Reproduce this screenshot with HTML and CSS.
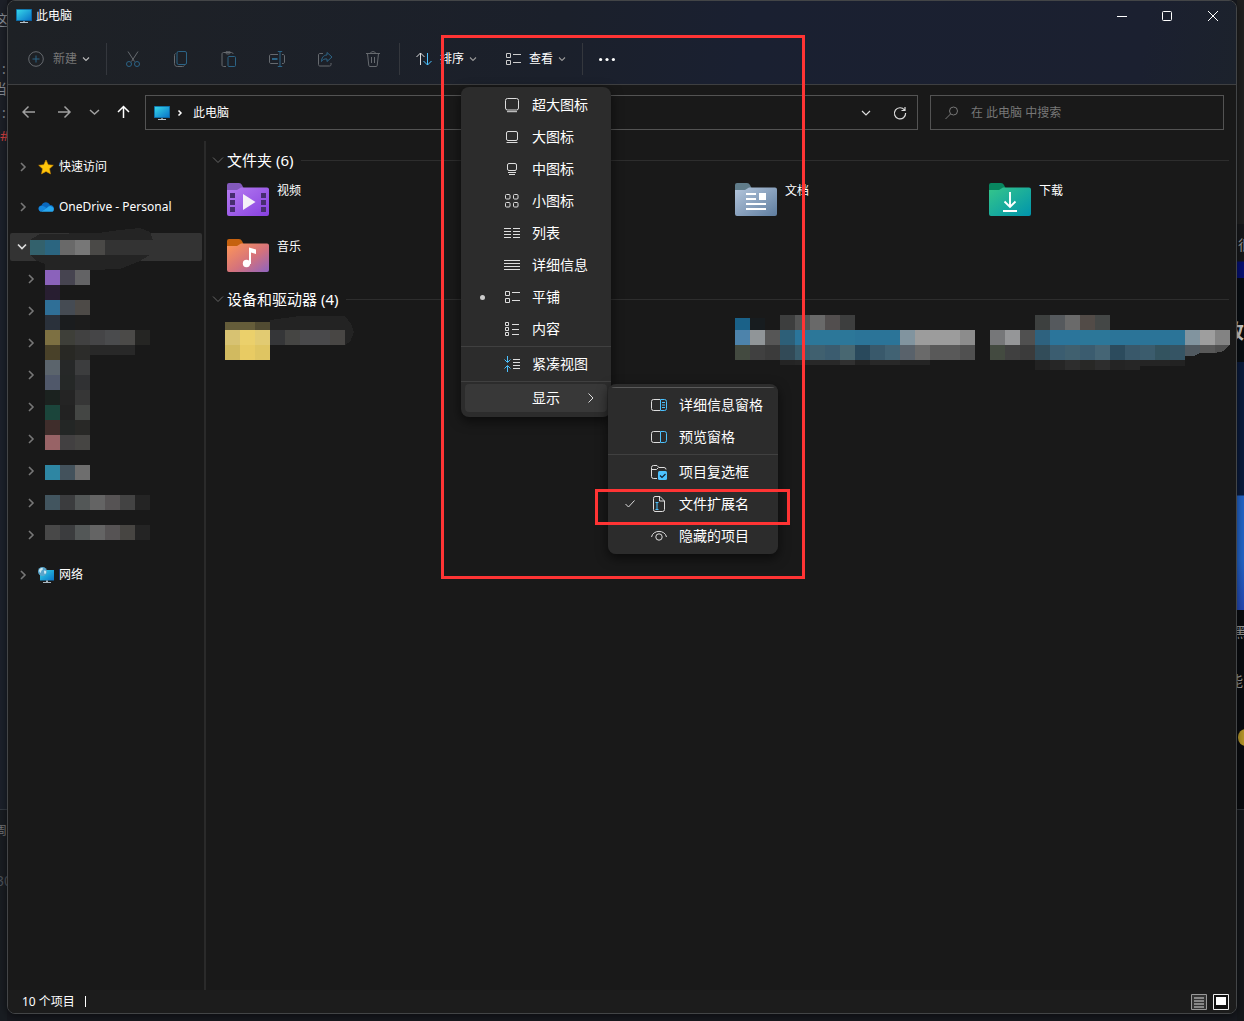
FILE: index.html
```html
<!DOCTYPE html>
<html lang="zh-CN">
<head>
<meta charset="utf-8">
<title>此电脑</title>
<link rel="stylesheet" href="styles.css">
</head>
<body>
<svg width="0" height="0" class="defs">
  <defs>
    <linearGradient id="scr" x1="0" y1="0" x2="1" y2="1"><stop offset="0" stop-color="#37d7e8"/><stop offset="1" stop-color="#0873c8"/></linearGradient>
    <linearGradient id="vid" x1="0" y1="0" x2="1" y2="1"><stop offset="0" stop-color="#b57cf0"/><stop offset="1" stop-color="#8740e0"/></linearGradient>
    <linearGradient id="mus" x1="0" y1="0" x2="1" y2="1"><stop offset="0" stop-color="#ff9756"/><stop offset=".55" stop-color="#d4727c"/><stop offset="1" stop-color="#8e64c0"/></linearGradient>
    <linearGradient id="doc" x1="0" y1="0" x2="1" y2="1"><stop offset="0" stop-color="#b4c6dc"/><stop offset="1" stop-color="#5f7d9f"/></linearGradient>
    <linearGradient id="dl" x1="0" y1="0" x2="1" y2="1"><stop offset="0" stop-color="#35c68a"/><stop offset="1" stop-color="#0094ad"/></linearGradient>
    <symbol id="pc" viewBox="0 0 16 16"><path d="M0 1h16v12H0z" fill="#0b5f9a"/><path d="M.8 1.8h14.4v10.4H.8z" fill="url(#scr)"/><path d="M7 13h2v1.5H7z" fill="#7b8790"/><path d="M4 14h8v1H4z" fill="#b8c4cc"/></symbol>
    <symbol id="down" viewBox="0 0 8 8"><path d="M1 2.5 4 5.5 7 2.5" fill="none" stroke="currentColor" stroke-width="1.1"/></symbol>
    <symbol id="right" viewBox="0 0 8 12"><path d="M2 2l4 4-4 4" fill="none" stroke="currentColor" stroke-width="1.6"/></symbol>
    <symbol id="tiles" viewBox="0 0 16 16"><path d="M1.5 2.5h4v4h-4zM1.5 9.5h4v4h-4zM8 3.5h8M8 11.5h8" fill="none" stroke="currentColor"/></symbol>
    <symbol id="group" viewBox="0 0 12 8"><path d="M1 1.500l5 5 5-5" fill="none" stroke="currentColor"/></symbol>
  </defs>
</svg>

<div class="desk-left">
  <span class="frag f1">这</span><span class="frag f2">:</span><span class="frag f3">当</span><span class="frag f4">:</span><span class="frag f5">#</span>
  <span class="frag f6">周</span><span class="frag f7">30</span>
</div>
<div class="desk-right">
  <span class="frag r1">很</span><span class="frag r2">改</span><span class="frag r3">黑</span><span class="frag r4">能</span><i class="dot"></i>
</div>

<div class="window">
  <header class="head">
    <div class="title">
      <svg class="i16"><use href="#pc"/></svg><span>此电脑</span>
      <svg class="winbtns" viewBox="0 0 102 12"><path d="M0 6.500h10" stroke="#fff"/><rect x="45.500" y="1.500" width="9" height="9" rx="1" fill="none" stroke="#fff"/><path d="M91 1l10 10M101 1l-10 10" stroke="#fff"/></svg>
    </div>
    <div class="toolbar">
      <svg class="i16 dim" viewBox="0 0 16 16"><circle cx="8" cy="8" r="7.300"/><path class="b" d="M4.500 8h7M8 4.500v7"/></svg>
      <span class="label dimtext">新建</span><svg class="chev pale"><use href="#down"/></svg>
      <i class="bar after-new"></i>
      <div class="tools">
        <svg class="i16 dim" viewBox="0 0 16 16"><path d="M3 .5l6.500 10M13 .5l-6.500 10"/><g class="b"><circle cx="4" cy="13" r="2.500"/><circle cx="12" cy="13" r="2.500"/></g></svg>
        <svg class="i16 dim" viewBox="0 0 16 16"><path d="M2.500 2.500C1.800 3 1.500 3.500 1.500 4.500v8c0 2 1 3 3 3h5c1 0 1.500-.3 2-1"/><rect class="b" x="4" y=".5" width="9.500" height="13" rx="1.500"/></svg>
        <svg class="i16 dim" viewBox="0 0 16 16"><path d="M5 15.500H2.500c-.8 0-1.500-.5-1.500-1.500V3c0-.8.5-1.500 1.500-1.500h8c1 0 1.500.7 1.500 1.500M4.500 1.500c0 2 5 2 5 0s-5-1.500-5 0z"/><rect class="b" x="7" y="5.500" width="7.500" height="10" rx="1"/></svg>
        <svg class="i16 dim" viewBox="0 0 16 16"><path d="M9 3.500H2c-1 0-1.500.5-1.500 1.500v6c0 1 .5 1.500 1.500 1.500h7M13 3.500h1c1 0 1.500.5 1.500 1.500v6c0 1-.5 1.500-1.500 1.500h-1"/><path class="b" d="M11 .5v15M8.800.5h4.400M8.800 15.500h4.400"/><path class="b" stroke-width="2" d="M3 8h5.500"/></svg>
        <svg class="i16 dim" viewBox="0 0 16 16"><path d="M6 2.500H3C2 2.500 1.500 3 1.500 4v9.500c0 1 .5 1.500 1.500 1.500h9.500c1 0 1.500-.5 1.500-1.500V12"/><path class="b" d="M10 1.500l5 4.500-5 4.500V8C7 7.500 5.500 9 4.500 10.500 4.500 7 6.500 4 10 4z"/></svg>
        <svg class="i16 dim" viewBox="0 0 16 16"><path d="M1 2.500h14M5.500 2.500c0-2.500 5-2.500 5 0M2.500 2.500l1.300 12c.1.700.5 1 1.200 1h6c.7 0 1.100-.3 1.200-1l1.300-12M6.500 6v6M9.500 6v6"/></svg>
      </div>
      <i class="bar after-tools"></i>
      <svg class="i16 lit" viewBox="0 0 16 16"><path d="M4.500 14V2M.5 6l4-4 4 4"/><path class="b" d="M11.500 2v12M7.500 10l4 4 4-4"/></svg>
      <span class="label near">排序</span><svg class="chev grey"><use href="#down"/></svg>
      <svg class="i16 lit view"><use href="#tiles"/></svg>
      <span class="label near">查看</span><svg class="chev grey"><use href="#down"/></svg>
      <i class="bar after-view"></i>
      <svg class="i16" viewBox="0 0 16 16" fill="#fff"><circle cx="1.600" cy="8.500" r="1.600"/><circle cx="8" cy="8.500" r="1.600"/><circle cx="14.400" cy="8.500" r="1.600"/></svg>
    </div>
  </header>

  <nav class="address">
    <svg class="arrows" viewBox="0 0 110 16" fill="none" stroke="#a0a0a0" stroke-width="1.500"><path d="M13 8H1.500M6.500 2.500L1 8l5.500 5.500M36 8h11.500M42.500 2.500L48 8l-5.500 5.500M68 6l4.500 4L77 6"/><path stroke="#fff" d="M101.500 14V2.500M96 8l5.500-5.500L107 8"/></svg>
    <div class="box path">
      <svg class="i16"><use href="#pc"/></svg>
      <svg class="crumb" viewBox="0 0 8 12"><path d="M2.500 3.500L5 6 2.500 8.500" fill="none" stroke="#fff" stroke-width="1.500"/></svg>
      <span>此电脑</span>
      <svg class="pathbtns" viewBox="0 0 48 16" fill="none" stroke="#ddd" stroke-width="1.200"><path d="M2 6l4 4 4-4M44.500 5A5.600 5.600 0 1 0 45.600 8M45 2v3.500h-3.500"/></svg>
    </div>
    <div class="box search">
      <svg class="i16" viewBox="0 0 16 16" fill="none" stroke="#777"><circle cx="9.500" cy="6" r="4"/><path d="M6.500 9L1.500 14"/></svg>
      <span>在 此电脑 中搜索</span>
    </div>
  </nav>

  <div class="body">
    <aside class="side">
      <div class="node"><svg class="arr"><use href="#right"/></svg><svg class="i16" viewBox="0 0 16 16"><path d="M8 1l2.200 4.700 5.100.6-3.800 3.500 1 5.100L8 12.400l-4.500 2.500 1-5.100L.7 6.300l5.100-.6z" fill="#ffc60a" stroke="#d99100" stroke-width=".6"/></svg><span>快速访问</span></div>
      <div class="node"><svg class="arr"><use href="#right"/></svg><svg class="i16" viewBox="0 0 16 16"><path d="M3 12.500C0 11.500-.5 7 3.500 6.500 5 2.500 10 2 12 6c3 0 4 2 4 4z" fill="#0a68bd"/><path d="M2.800 12.700C0 12-.5 7.500 3.500 6.700c2 0 3.500 1.300 5 2.300z" fill="#1587dd"/><path d="M3 12.800L9 8.800c1-1 2.500-2.300 4-1.500 4 1 3.500 5.500.5 5.500z" fill="#27a7ef"/></svg><span class="latin">OneDrive - Personal</span></div>
      <div class="node current"><svg class="open" viewBox="0 0 10 8"><path d="M1 1.500l4 4 4-4" fill="none" stroke="#ddd" stroke-width="1.700"/></svg></div>
      <div class="children">
        <div><svg class="arr"><use href="#right"/></svg></div><div><svg class="arr"><use href="#right"/></svg></div><div><svg class="arr"><use href="#right"/></svg></div>
        <div><svg class="arr"><use href="#right"/></svg></div><div><svg class="arr"><use href="#right"/></svg></div><div><svg class="arr"><use href="#right"/></svg></div>
        <div><svg class="arr"><use href="#right"/></svg></div><div><svg class="arr"><use href="#right"/></svg></div><div><svg class="arr"><use href="#right"/></svg></div>
      </div>
      <div class="node net"><svg class="arr"><use href="#right"/></svg><svg class="i16" viewBox="0 0 16 16"><path d="M2 3h14v10.500H2z" fill="url(#scr)"/><path d="M8 13.500h2V15H8zM5 15h8v1H5z" fill="#a9b7c0"/><circle cx="4.500" cy="4.500" r="4.500" fill="#5aa5cb"/><path d="M1 3c2-3 4-2 4-1s-2 1-2 3-2 0-2-2zM6 4c1-1 3 0 2 2s-2 1-2-2z" fill="#cdeaf3"/></svg><span>网络</span></div>
    </aside>
    <main class="main">
      <h2 class="group"><svg><use href="#group"/></svg><span>文件夹 (6)</span></h2>
      <div class="folders">
        <div class="folder"><svg viewBox="0 0 42 33"><path d="M0 10V2Q0 0 2 0h10q2 0 3 2l2 4H42v4z" fill="#8359bc"/><path d="M0 7h10l4-2.500h26q2 0 2 2V31q0 2-2 2H2q-2 0-2-2z" fill="url(#vid)"/><path d="M3 10h5v5H3zM3 17h5v5H3zM3 24h5v5H3zM34 10h5v5h-5zM34 17h5v5h-5zM34 24h5v5h-5z" fill="#472d70"/><path d="M16 11l12.500 8L16 27z" fill="#f4f0f8"/></svg><span>视频</span></div>
        <div class="folder hidden-tile"></div>
        <div class="folder"><svg viewBox="0 0 42 33"><path d="M0 10V2Q0 0 2 0h10q2 0 3 2l2 4v4z" fill="#607c8a"/><path d="M0 7h10l4-2.500h26q2 0 2 2V31q0 2-2 2H2q-2 0-2-2z" fill="url(#doc)"/><path d="M11 10h10v2H11zM11 15h10v2H11zM11 20h20v2H11zM11 25h20v2H11zM24 10h7v7h-7z" fill="#fff"/></svg><span>文档</span></div>
        <div class="folder"><svg viewBox="0 0 42 33"><path d="M0 10V2Q0 0 2 0h10q2 0 3 2l2 4v4z" fill="#08865f"/><path d="M0 7h10l4-2.500h26q2 0 2 2V31q0 2-2 2H2q-2 0-2-2z" fill="url(#dl)"/><path d="M21 9v15M15.500 18.500L21 24l5.500-5.500M14 28h14" fill="none" stroke="#fff" stroke-width="1.900"/></svg><span>下载</span></div>
        <div class="folder"><svg viewBox="0 0 42 33"><path d="M0 10V2Q0 0 2 0h10q2 0 3 2l2 4v4z" fill="#c5610f"/><path d="M0 7h10l4-2.500h26q2 0 2 2V31q0 2-2 2H2q-2 0-2-2z" fill="url(#mus)"/><path d="M22 8.500l7 2V15l-5-1.500V25h-2z" fill="#fff"/><circle cx="19.500" cy="24.500" r="3.700" fill="#fff"/></svg><span>音乐</span></div>
      </div>
      <h2 class="group"><svg><use href="#group"/></svg><span>设备和驱动器 (4)</span></h2>
    </main>
  </div>

  <footer class="status"><span>10 个项目</span><i class="caret"></i>
    <svg viewBox="0 0 38 16"><path d="M.5.5h15v15H.5z" fill="#333" stroke="#999"/><path d="M3 4h10M3 7h10M3 10h10M3 13h10" stroke="#ddd"/><path d="M22.500.5h15v15h-15z" fill="#111" stroke="#eee"/><path d="M25 3h10v8H25z" fill="#fff"/></svg>
  </footer>
</div>

<svg class="mosaic" viewBox="0 0 1244 1021" shape-rendering="crispEdges"></svg>

<div class="menu view-menu">
  <div class="item"><i></i><svg viewBox="0 0 16 16"><rect x="1.500" y="1.500" width="13" height="11.500" rx="2"/><path d="M3 14.700h10"/></svg><span>超大图标</span></div>
  <div class="item"><i></i><svg viewBox="0 0 16 16"><rect x="2.500" y="2.500" width="11" height="9" rx="1.500"/><path d="M2.500 13.500h11"/></svg><span>大图标</span></div>
  <div class="item"><i></i><svg viewBox="0 0 16 16"><rect x="3.500" y="2.500" width="9" height="7" rx="1.500"/><path d="M4 11.500h8M5 13.500h6"/></svg><span>中图标</span></div>
  <div class="item"><i></i><svg viewBox="0 0 16 16"><rect x="1.500" y="1.500" width="4.500" height="4.500" rx="1"/><rect x="9.500" y="1.500" width="4.500" height="4.500" rx="1"/><rect x="1.500" y="9.500" width="4.500" height="4.500" rx="1"/><rect x="9.500" y="9.500" width="4.500" height="4.500" rx="1"/></svg><span>小图标</span></div>
  <div class="item"><i></i><svg viewBox="0 0 16 16"><path d="M0 3.500h7M9 3.500h7M0 6.500h7M9 6.500h7M0 9.500h7M9 9.500h7M0 12.500h7M9 12.500h7"/></svg><span>列表</span></div>
  <div class="item"><i></i><svg viewBox="0 0 16 16"><path d="M0 3.500h16M0 6.500h16M0 9.500h16M0 12.500h16"/></svg><span>详细信息</span></div>
  <div class="item"><i><b class="bullet"></b></i><svg><use href="#tiles"/></svg><span>平铺</span></div>
  <div class="item"><i></i><svg viewBox="0 0 16 16"><path d="M1.500 1.500h3v3h-3zM1.500 6.500h3v3h-3zM1.500 11.500h3v3h-3zM8 3.500h7M8 8.500h7M8 13.500h7"/></svg><span>内容</span></div>
  <hr>
  <div class="item"><i></i><svg viewBox="0 0 16 16"><path d="M9 3.500h7M9 6.500h7M9 9.500h7M9 12.500h7"/><path class="b" d="M3.500 0v6M.5 3.500l3 3 3-3M3.500 16v-6M.5 12.500l3-3 3 3"/></svg><span>紧凑视图</span></div>
  <hr>
  <div class="item hot"><span>显示</span><svg class="more" viewBox="0 0 8 12"><path d="M1.500 1.500L6 6l-4.500 4.500"/></svg></div>
</div>

<div class="menu show-menu">
  <div class="item"><i></i><svg viewBox="0 0 16 16"><path d="M9 2.500H2.500Q.5 2.500.5 4.500v7q0 2 2 2H9"/><path class="b" d="M9.500 2.500h4q2 0 2 2v7q0 2-2 2h-4zM11 5.500h3M11 8h3M11 10.500h3"/></svg><span>详细信息窗格</span></div>
  <div class="item"><i></i><svg viewBox="0 0 16 16"><path d="M9 2.500H2.500Q.5 2.500.5 4.500v7q0 2 2 2H9"/><path class="b" d="M9.500 2.500h4q2 0 2 2v7q0 2-2 2h-4z"/></svg><span>预览窗格</span></div>
  <hr>
  <div class="item"><i></i><svg viewBox="0 0 16 16"><path d="M6 14.500H2.500q-2 0-2-2v-9q0-2 2-2H6l2 2h5q2 0 2 2M.5 5.500h5l2-2"/><rect x="7" y="7" width="9" height="9" rx="1.500" fill="#4cc2ff" stroke="none"/><path d="M9 11.500l2 2 3.500-3.500" stroke="#123" stroke-width="1.200"/></svg><span>项目复选框</span></div>
  <div class="item"><i><svg class="check" viewBox="0 0 12 10"><path d="M1.500 5l3 3 6-6.500"/></svg></i><svg viewBox="0 0 16 16"><path d="M4 .5h5l4.500 4.500v8.500q0 2-2 2H4q-1.500 0-1.500-2v-11Q2.500.5 4 .5zM8.500.5V5h5"/><path class="b" d="M6 6.500v7M4.500 6.500h3M4.500 13.500h3"/></svg><span>文件扩展名</span></div>
  <div class="item"><i></i><svg viewBox="0 0 16 16"><path d="M.5 9C2 1.500 14 1.500 15.500 9"/><circle cx="8" cy="9" r="3.200"/></svg><span>隐藏的项目</span></div>
</div>

<div class="mark outer"></div>
<div class="mark inner"></div>
<script src="mosaic.js"></script>
</body>
</html>
```

FILE: styles.css
```css
* { box-sizing: border-box; }
body { margin: 0; width: 1244px; height: 1021px; overflow: hidden; position: relative; background: #17191f; color: #fff; font: 12px/16px "Noto Sans", "Noto Sans CJK SC", sans-serif; }
svg { display: block; flex: none; }
.defs { position: absolute; }
.i16 { width: 16px; height: 16px; }

.desk-left { position: absolute; left: 0; top: 0; width: 7px; height: 1021px; overflow: hidden; background: linear-gradient(#1d2028 0 170px, #1c212b 171px 809px, #343a42 809px 810px, #191d22 810px); }
.desk-right { position: absolute; left: 1237px; top: 0; width: 7px; height: 1021px; overflow: hidden; background: linear-gradient(#202020 0 224px, #17181b 224px 261px, #051074 262px 278px, #080d12 278px 362px, #0a1b3c 362px 495px, #2364c8 496px 560px, #2448b4 610px, #0a0c10 610px 809px, #30343a 809px 810px, #15171b 810px); }
.frag { position: absolute; font-size: 14px; line-height: 16px; color: #8a8e96; }
.f1 { left: -6px; top: 12px; }
.f2 { left: 2px; top: 61px; }
.f3 { left: -7px; top: 81px; }
.f4 { left: 2px; top: 105px; }
.f5 { left: 0; top: 128px; color: #d04040; }
.f6 { left: -5px; top: 823px; font-size: 12px; color: #777; }
.f7 { left: -4px; top: 873px; color: #4c5259; }
.r1 { left: 1px; top: 237px; color: #999; }
.r2 { left: -13px; top: 324px; font-size: 20px; font-weight: 700; color: #ccc; }
.r3 { left: -4px; top: 624px; color: #999; }
.r4 { left: -8px; top: 673px; color: #999; }
.dot { position: absolute; left: 1px; top: 729px; width: 16px; height: 17px; border-radius: 8px; background: #b59629; }

.window { position: absolute; left: 7px; top: 0; width: 1230px; height: 1014px; border: 1px solid #434547; border-radius: 8px; overflow: hidden; background: #191919; display: flex; flex-direction: column; box-shadow: 0 2px 8px #0008; }
.head { height: 84px; border-bottom: 1px solid #3e3f41; background: linear-gradient(100deg, #1e2125, #1b202b 45%, #1a2031 60%, #1b2030 92%, #1c222c); }
.title { height: 30px; padding-left: 8px; display: flex; align-items: center; gap: 4px; }
.winbtns { width: 102px; height: 12px; margin: 0 17px 0 auto; }
.toolbar { height: 53px; padding: 2px 0 0 20px; display: flex; align-items: center; }
.dim { fill: none; stroke: #666a6f; }
.dim .b { stroke: #2c6486; }
.lit { fill: none; stroke: #ddd; color: #ccc; }
.lit use { stroke: none; }
.lit .b { stroke: #4cc2ff; }
.label { margin-left: 9px; width: 24px; white-space: nowrap; }
.near { margin-left: 8px; }
.dimtext { color: #777; }
.chev { width: 8px; height: 8px; margin-left: 5px; }
.pale { color: #bbb; }
.grey { color: #999; }
.bar { width: 1px; height: 32px; background: #34373d; }
.after-new { margin: 0 18px 0 16px; }
.tools { display: flex; gap: 32px; }
.after-tools { margin: 0 16px 0 18px; }
.view { margin-left: 28px; }
.after-view { margin: 0 16px; }

.address { height: 56px; padding: 10px 12px 0 14px; display: flex; align-items: flex-start; }
.arrows { width: 110px; height: 16px; margin-top: 9px; }
.box { height: 35px; border: 1px solid #535353; display: flex; align-items: center; }
.path { width: 773px; margin: 0 12px 0 13px; padding-left: 8px; }
.crumb { width: 8px; height: 12px; margin: 0 9px 0 6px; }
.pathbtns { width: 48px; height: 16px; margin: 0 9px 0 auto; }
.search { width: 294px; padding-left: 13px; gap: 11px; color: #777; }

.body { flex: 1; display: flex; min-height: 0; }
.side { width: 198px; padding: 6px 2px 0; border-right: 2px solid #2a2a2a; }
.node { height: 40px; display: flex; align-items: center; padding-left: 9px; }
.arr { width: 8px; height: 12px; color: #777; }
.node .i16 { margin: 0 5px 0 11px; }
.latin { font-family: "Noto Sans", "Open Sans", sans-serif; }
.current { height: 28px; margin: 6px 0 2px; padding-left: 7px; background: #333; border-radius: 2px; }
.open { width: 10px; height: 8px; }
.children > div { height: 32px; display: flex; align-items: center; padding-left: 17px; }
.net { margin-top: 4px; }

.main { flex: 1; padding: 0 7px 0 6px; }
.group { margin: 0; height: 38px; display: flex; align-items: center; font-size: 15px; line-height: 20px; font-weight: 400; white-space: nowrap; }
.group svg { width: 12px; height: 8px; margin-right: 3px; color: #666; }
.group::after { content: ""; flex: 1; height: 1px; margin-left: 8px; background: #2d2d2d; }
.folders { display: grid; grid-template-columns: repeat(4, 254px); grid-auto-rows: 45px; row-gap: 11px; padding-left: 15px; width: 1015px; }
.folder { display: flex; gap: 8px; padding-top: 4px; }
.folder svg { width: 42px; height: 33px; }
.status { height: 23px; background: #1c1c1c; padding: 0 7px 0 14px; display: flex; align-items: center; }
.caret { width: 1px; height: 11px; margin-left: 10px; background: #fff; }
.status svg { width: 38px; height: 16px; margin-left: auto; }

.mosaic { position: absolute; left: 0; top: 0; width: 1244px; height: 1021px; }

.menu { position: absolute; background: #2c2c2c; border-radius: 8px; box-shadow: 0 4px 12px #0009; font-size: 14px; line-height: 20px; }
.view-menu { left: 461px; top: 87px; width: 150px; height: 330px; padding-top: 2px; }
.show-menu { left: 608px; top: 384px; width: 170px; height: 170px; padding-top: 2px; border-top: 3px solid #2c2c2c; background: linear-gradient(#5a5a5a 1px, #2c2c2c 1px); }
.item { height: 32px; display: flex; align-items: center; white-space: nowrap; }
.item > i { width: 43px; display: flex; justify-content: center; }
.item > svg { width: 16px; height: 16px; margin-right: 12px; }
.item svg { fill: none; stroke: #ddd; color: #ddd; }
.item use { stroke: none; }
.item .b { stroke: #4cc2ff; }
.bullet { width: 5px; height: 5px; border-radius: 3px; background: #ccc; }
.menu hr { height: 1px; margin: 1px 0; border: 0; background: #404040; }
.item.hot { height: 28px; margin: 2px 4px; padding: 0 12px 0 67px; border-radius: 4px; background: #383838; justify-content: space-between; }
.item > svg.more { width: 8px; height: 12px; margin: 0; }
.check { width: 12px; height: 10px; }

.mark { position: absolute; border: 3px solid #ff3434; }
.outer { left: 441px; top: 35px; width: 364px; height: 544px; }
.inner { left: 595px; top: 489px; width: 195px; height: 36px; }
```

FILE: mosaic.js
```js
// Pixelated strips: [x, y, height, colours of consecutive 15px cells]
const strips = [
  [30, 240, 15, "33616c 2b6580 696969 777777 4a4947 333333 333333 333333"],
  [45, 270, 15, "8b62bb 464450 636365"],
  [45, 285, 15, "281e31"],
  [45, 300, 15, "2f6f97 454b53 4d4a47"],
  [45, 315, 15, "2a313b 1a1c1e 1c1c1c"],
  [45, 330, 15, "7d7042 3e3f39 414141 454547 4a4b4d 4b4a48 252523"],
  [45, 345, 15, "494129 282824 2c2c2a"],
  [90, 345, 10, "282828 282828 282828"],
  [45, 360, 15, "5b646c 262828 3c3d3e"],
  [45, 375, 15, "50586a 252827 303133"],
  [45, 390, 15, "1b221f 242424 363636"],
  [45, 405, 15, "1b453b 222222 444644"],
  [45, 420, 15, "3f2d2b 232625 282826"],
  [45, 435, 15, "986366 424041 464543"],
  [45, 465, 15, "2e86a3 43525c 6e6e6e"],
  [45, 495, 15, "42555f 3b3c3e 535757 646464 565354 434343 242424"],
  [45, 525, 15, "484848 3b3c3e 535757 646464 565354 474542 242424"],
  [225, 322, 8, "655d3a 655d3a 514b32"],
  [225, 330, 15, "d7c272 ebd06b e2cb72 353638 454543 49494b 49494b 484644"],
  [225, 345, 15, "d1ba60 e8cb63 dfc562"],
  [735, 318, 12, "1a6188 171c1f"],
  [780, 315, 15, "3d3e3e 535454 696969 524e4e 3d3e3e"],
  [735, 330, 15, "4d83ab 909598 565656 2d5f78 2b759b 2c7799 2c7799 2c7799 2b7498 2b7498 2b7498 81949f 9c9c9c 9c9c9c 9c9c9c 8c8c8c"],
  [735, 345, 15, "434a40 404040 3b3b3b 324a57 395d6d 40606f 3b5c6f 486771 29495c 39596b 416273 59626b 6a6a6a 595959 595959 505050"],
  [780, 360, 5, "242424 262626 282828 282828 303030 222222 282828 282828 242424 242424"],
  [1035, 315, 15, "3d403f 55595d 6a6a6a 524b47 444746"],
  [990, 330, 15, "767779 959698 505050 2e627f 2b759b 2b759b 2c7799 2c7799 2b7498 2b7498 2b7498 2b7498 2b7498 81949f 9e9e9e 838383"],
  [990, 345, 15, "434a40 404040 3b3b3b 324c59 3b5d70 40606f 3b5c6f 456575 2c4b5d 39586a 3b5c6d 33535f 355464"],
  [1035, 360, 10, "222222 262626 2d2d2d 282826 2d2d2d 242424 262626"],
  [1140, 360, 6, "242424 242424 222222"]
];
const shapes = [
  ["M30 240L40 234 98 233 120 230 140 228 150 232 153 240zM30 255h120l-10 6-20 8-30 1H45v-6l-10-4z", "#242424"],
  ["M270 320l30-4h45l6 8 3 8-4 10-5 3h-75z", "#232323"],
  ["M1185 345h15v8l-6 3h-9z", "#505960"],
  ["M1200 345h15v8h-15z", "#595959"],
  ["M1215 345h14l-5 6-9 2z", "#505050"]
];
const svg = document.querySelector(".mosaic");
function add(tag, attrs) {
  const el = document.createElementNS("http://www.w3.org/2000/svg", tag);
  for (const k in attrs) el.setAttribute(k, attrs[k]);
  svg.append(el);
}
shapes.forEach(([d, fill]) => add("path", { d, fill }));
strips.forEach(([x, y, height, row]) =>
  row.split(" ").forEach((c, i) => add("rect", { x: x + i * 15, y, width: 15, height, fill: "#" + c })));
```
